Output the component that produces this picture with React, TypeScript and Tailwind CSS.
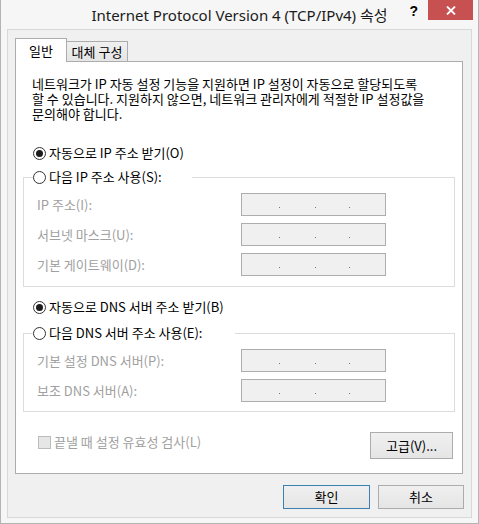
import React from 'react';

const Radio = ({ checked }: { checked?: boolean }) => (
  <span className="flex h-[13px] w-[13px] shrink-0 items-center justify-center rounded-full border border-[#333333] bg-white">
    {checked && <span className="h-[7px] w-[7px] rounded-full bg-[#1c1c1c]" />}
  </span>
);

const AddressBox = () => (
  <div className="flex h-[23px] w-[145px] items-end border border-[#adadad] bg-[#f0f0f0] pb-[7px] pl-[37px]">
    <span className="h-[1px] w-[1px] bg-[#777777]" />
    <span className="ml-[35px] h-[1px] w-[1px] bg-[#777777]" />
    <span className="ml-[33px] h-[1px] w-[1px] bg-[#777777]" />
  </div>
);

const FieldRow = ({ label }: { label: string }) => (
  <>
    <span className="text-[#a0a0a0]">{label}</span>
    <AddressBox />
  </>
);

const Button = ({ label, primary, className }: { label: string; primary?: boolean; className?: string }) => (
  <button
    type="button"
    className={`flex items-center justify-center border bg-linear-to-b from-[#f0f0f0] to-[#e5e5e5] text-[13px] leading-[16px] text-black ${
      primary ? 'border-[#3c7fb1]' : 'border-[#acacac]'
    } ${className ?? ''}`}
  >
    {label}
  </button>
);

const App = () => {
  return (
    <div className="flex h-[524px] w-[479px] flex-col border-x border-b border-[#b4b4b4] bg-[#f6f6f6] font-['Noto_Sans_CJK_KR',sans-serif] text-[13px] leading-[16px] text-black">
      {/* title bar */}
      <div className="grid h-[29px] shrink-0 grid-cols-[1fr_auto_1fr] items-center">
        <div />
        <div className="font-['Noto_Sans','Noto_Sans_CJK_KR',sans-serif] text-[15px] leading-[20px] text-[#1a1a1a]">
          Internet Protocol Version 4 (TCP/IPv4) 속성
        </div>
        <div className="flex h-full items-start justify-end">
          <span className="mt-[3px] font-['Liberation_Sans',sans-serif] text-[14px] font-bold leading-[16px]">?</span>
          <div className="ml-[10px] mr-[5px] flex h-[20px] w-[45px] items-center justify-center bg-[#c75050]">
            <svg width="10" height="9" viewBox="0 0 10 9">
              <path d="M1 0.5 L9 8.5 M9 0.5 L1 8.5" stroke="white" strokeWidth="1.8" />
            </svg>
          </div>
        </div>
      </div>

      {/* client area */}
      <div className="mx-[6px] mb-[5px] flex flex-1 flex-col border border-[#d8d8d8] bg-[#f0f0f0] px-[7px] pt-[8px]">
        {/* tabs */}
        <div className="flex items-end">
          <div className="relative z-10 -mb-[1px] flex h-[24px] w-[52px] items-center justify-center border-x border-t border-[#acacac] bg-white">
            일반
          </div>
          <div className="flex h-[20px] w-[61px] items-center justify-center border-r border-t border-[#acacac] bg-linear-to-b from-[#f0f0f0] to-[#e5e5e5]">
            대체 구성
          </div>
        </div>

        {/* tab page */}
        <div className="mr-[1px] flex flex-col border border-[#acacac] bg-white pb-[14px] pt-[14px]">
          <p className="pl-[16px] leading-[15px]">
            네트워크가 IP 자동 설정 기능을 지원하면 IP 설정이 자동으로 할당되도록
            <br />
            할 수 있습니다. 지원하지 않으면, 네트워크 관리자에게 적절한 IP 설정값을
            <br />
            문의해야 합니다.
          </p>

          <div className="ml-[17px] mt-[24px] flex h-[16px] items-center gap-[3px]">
            <Radio checked />
            <span>자동으로 IP 주소 받기(O)</span>
          </div>

          <fieldset className="mx-[7px] mt-[8px] border border-[#dcdcdc] pb-[10px] pt-[8px]">
            <legend className="ml-[9px] pr-[30px]">
              <div className="flex h-[16px] items-center gap-[3px] bg-white">
                <Radio />
                <span>다음 IP 주소 사용(S):</span>
              </div>
            </legend>
            <div className="grid grid-cols-[204px_145px] items-center gap-y-[7px] pl-[13px]">
              <FieldRow label="IP 주소(I):" />
              <FieldRow label="서브넷 마스크(U):" />
              <FieldRow label="기본 게이트웨이(D):" />
            </div>
          </fieldset>

          <div className="ml-[17px] mt-[12px] flex h-[16px] items-center gap-[3px]">
            <Radio checked />
            <span>자동으로 DNS 서버 주소 받기(B)</span>
          </div>

          <fieldset className="mx-[7px] mt-[10px] border border-[#dcdcdc] pb-[9px] pt-[8px]">
            <legend className="ml-[9px] pr-[33px]">
              <div className="flex h-[16px] items-center gap-[3px] bg-white">
                <Radio />
                <span>다음 DNS 서버 주소 사용(E):</span>
              </div>
            </legend>
            <div className="grid grid-cols-[204px_145px] items-center gap-y-[7px] pl-[13px]">
              <FieldRow label="기본 설정 DNS 서버(P):" />
              <FieldRow label="보조 DNS 서버(A):" />
            </div>
          </fieldset>

          <div className="mt-[20px] flex items-start justify-between pl-[22px] pr-[9px]">
            <div className="mt-[2px] flex h-[16px] items-center gap-[3px] text-[#a0a0a0]">
              <span className="h-[13px] w-[13px] border border-[#bcbcbc] bg-[#e6e6e6]" />
              <span>끝낼 때 설정 유효성 검사(L)</span>
            </div>
            <Button label="고급(V)..." className="h-[27px] w-[83px]" />
          </div>
        </div>

        {/* dialog buttons */}
        <div className="mt-[11px] flex justify-end gap-[8px]">
          <Button label="확인" primary className="h-[24px] w-[87px]" />
          <Button label="취소" className="h-[24px] w-[86px]" />
        </div>
      </div>
    </div>
  );
};

export default App;
